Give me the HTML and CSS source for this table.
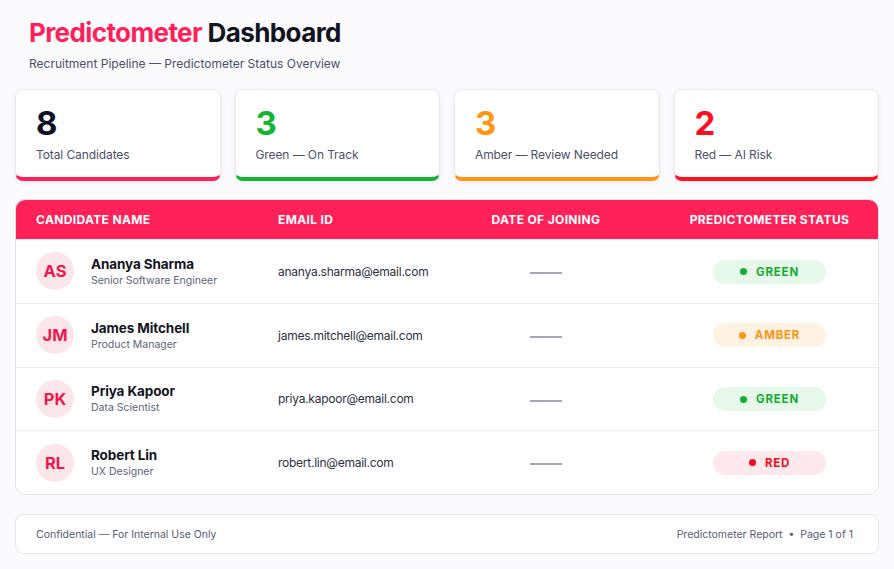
FILE: index.html
```html
<!DOCTYPE html>
<html lang="en">
<head>
  <meta charset="UTF-8">
  <meta name="viewport" content="width=device-width, initial-scale=1.0">
  <title>Predictometer Dashboard</title>
  <link rel="stylesheet" href="styles.css">
</head>
<body>
  <div class="page">
    <header class="page-head">
      <h1><span class="brand">Predictometer</span> Dashboard</h1>
      <p class="subtitle">Recruitment Pipeline — Predictometer Status Overview</p>
    </header>

    <div class="stats">
      <div class="stat stat-total">
        <div class="stat-num">8</div>
        <div class="stat-label">Total Candidates</div>
      </div>
      <div class="stat stat-green">
        <div class="stat-num">3</div>
        <div class="stat-label">Green — On Track</div>
      </div>
      <div class="stat stat-amber">
        <div class="stat-num">3</div>
        <div class="stat-label">Amber — Review Needed</div>
      </div>
      <div class="stat stat-red">
        <div class="stat-num">2</div>
        <div class="stat-label">Red — AI Risk</div>
      </div>
    </div>

    <div class="table">
      <div class="row head">
        <div class="cell">Candidate Name</div>
        <div class="cell">Email ID</div>
        <div class="cell center">Date of Joining</div>
        <div class="cell center">Predictometer Status</div>
      </div>

      <div class="row">
        <div class="cell person">
          <div class="avatar">AS</div>
          <div>
            <div class="name">Ananya Sharma</div>
            <div class="role">Senior Software Engineer</div>
          </div>
        </div>
        <div class="cell email">ananya.sharma@email.com</div>
        <div class="cell center"><span class="dash"></span></div>
        <div class="cell center"><span class="pill green"><i class="dot"></i>GREEN</span></div>
      </div>

      <div class="row">
        <div class="cell person">
          <div class="avatar">JM</div>
          <div>
            <div class="name">James Mitchell</div>
            <div class="role">Product Manager</div>
          </div>
        </div>
        <div class="cell email">james.mitchell@email.com</div>
        <div class="cell center"><span class="dash"></span></div>
        <div class="cell center"><span class="pill amber"><i class="dot"></i>AMBER</span></div>
      </div>

      <div class="row">
        <div class="cell person">
          <div class="avatar">PK</div>
          <div>
            <div class="name">Priya Kapoor</div>
            <div class="role">Data Scientist</div>
          </div>
        </div>
        <div class="cell email">priya.kapoor@email.com</div>
        <div class="cell center"><span class="dash"></span></div>
        <div class="cell center"><span class="pill green"><i class="dot"></i>GREEN</span></div>
      </div>

      <div class="row">
        <div class="cell person">
          <div class="avatar">RL</div>
          <div>
            <div class="name">Robert Lin</div>
            <div class="role">UX Designer</div>
          </div>
        </div>
        <div class="cell email">robert.lin@email.com</div>
        <div class="cell center"><span class="dash"></span></div>
        <div class="cell center"><span class="pill red"><i class="dot"></i>RED</span></div>
      </div>
    </div>

    <footer class="foot">
      <span>Confidential — For Internal Use Only</span>
      <span>Predictometer Report &nbsp;•&nbsp; Page 1 of 1</span>
    </footer>
  </div>
</body>
</html>
```

FILE: styles.css
```css
* { margin: 0; padding: 0; box-sizing: border-box; }
body {
  background: #fbfbfd;
  font-family: 'Inter', 'Liberation Sans', sans-serif;
  color: #111322;
}
.page {
  padding: 17px 15px 16px;
}
.page-head {
  padding-left: 14px;
}
h1 {
  font-size: 26px;
  font-weight: 700;
  letter-spacing: -0.6px;
  line-height: 32px;
}
.brand { color: #ff1f5a; }
.subtitle {
  margin-top: 7px;
  font-size: 12px;
  color: #4a5068;
}
.stats {
  display: grid;
  grid-template-columns: repeat(4, 1fr);
  gap: 14px;
  margin-top: 18px;
}
.stat {
  background: #fff;
  border: 1px solid #e8e9ef;
  border-bottom: 4px solid #ff1f5a;
  border-radius: 8px;
  padding: 15px 20px 15px;
  box-shadow: 0 2px 6px rgba(20, 22, 40, 0.06);
}
.stat-num {
  font-size: 33px;
  font-weight: 700;
  line-height: 36px;
}
.stat-label {
  margin-top: 6px;
  font-size: 12px;
  letter-spacing: -0.1px;
  line-height: 15px;
  color: #4a5068;
}
.stat-total .stat-num { color: #0e0f22; }
.stat-green { border-bottom-color: #13b433; }
.stat-green .stat-num { color: #13b433; }
.stat-amber { border-bottom-color: #ff9511; }
.stat-amber .stat-num { color: #ff9511; }
.stat-red { border-bottom-color: #ff0d1d; }
.stat-red .stat-num { color: #ff0d1d; }

.table {
  margin-top: 18px;
  background: #fff;
  border: 1px solid #e3e4eb;
  border-radius: 10px;
  overflow: hidden;
}
.row {
  display: grid;
  grid-template-columns: 242px 173px 230px 1fr;
  align-items: center;
  height: 63.75px;
  border-top: 1px solid #ebecf2;
}
.row.head {
  height: 39px;
  border-top: none;
  background: #ff2158;
  color: #fff;
  font-size: 12px;
  font-weight: 700;
  letter-spacing: 0.35px;
  text-transform: uppercase;
}
.cell { padding-left: 20px; }
.cell.center { padding-left: 0; text-align: center; }
.person {
  display: flex;
  align-items: center;
  gap: 17px;
}
.avatar {
  width: 38px;
  height: 38px;
  border-radius: 50%;
  background: #fde6ea;
  color: #f2184a;
  font-weight: 700;
  font-size: 16.5px;
  display: flex;
  align-items: center;
  justify-content: center;
}
.name {
  font-size: 13.5px;
  font-weight: 700;
  letter-spacing: -0.1px;
  color: #14151f;
}
.role {
  font-size: 10.5px;
  color: #5d6378;
  margin-top: 2px;
}
.email {
  font-size: 12px;
  letter-spacing: -0.25px;
  color: #2c3040;
}
.dash {
  display: inline-block;
  width: 32px;
  height: 2px;
  background: #a3a6b5;
  vertical-align: middle;
}
.pill {
  display: inline-flex;
  align-items: center;
  justify-content: center;
  gap: 9px;
  width: 113px;
  height: 24px;
  border-radius: 12px;
  font-size: 11.5px;
  font-weight: 700;
  letter-spacing: 0.8px;
}
.dot {
  width: 7px;
  height: 7px;
  border-radius: 50%;
  background: currentColor;
}
.pill.green { background: #e6f8ea; color: #14ad33; }
.pill.amber { background: #fff2e2; color: #ff9410; }
.pill.red { background: #fde8ec; color: #f50c1c; }

.foot {
  margin-top: 19px;
  height: 40px;
  background: #fff;
  border: 1px solid #e6e7ee;
  border-radius: 8px;
  display: flex;
  align-items: center;
  justify-content: space-between;
  padding: 0 25px 0 20px;
  font-size: 10.5px;
  color: #555b72;
}
```
